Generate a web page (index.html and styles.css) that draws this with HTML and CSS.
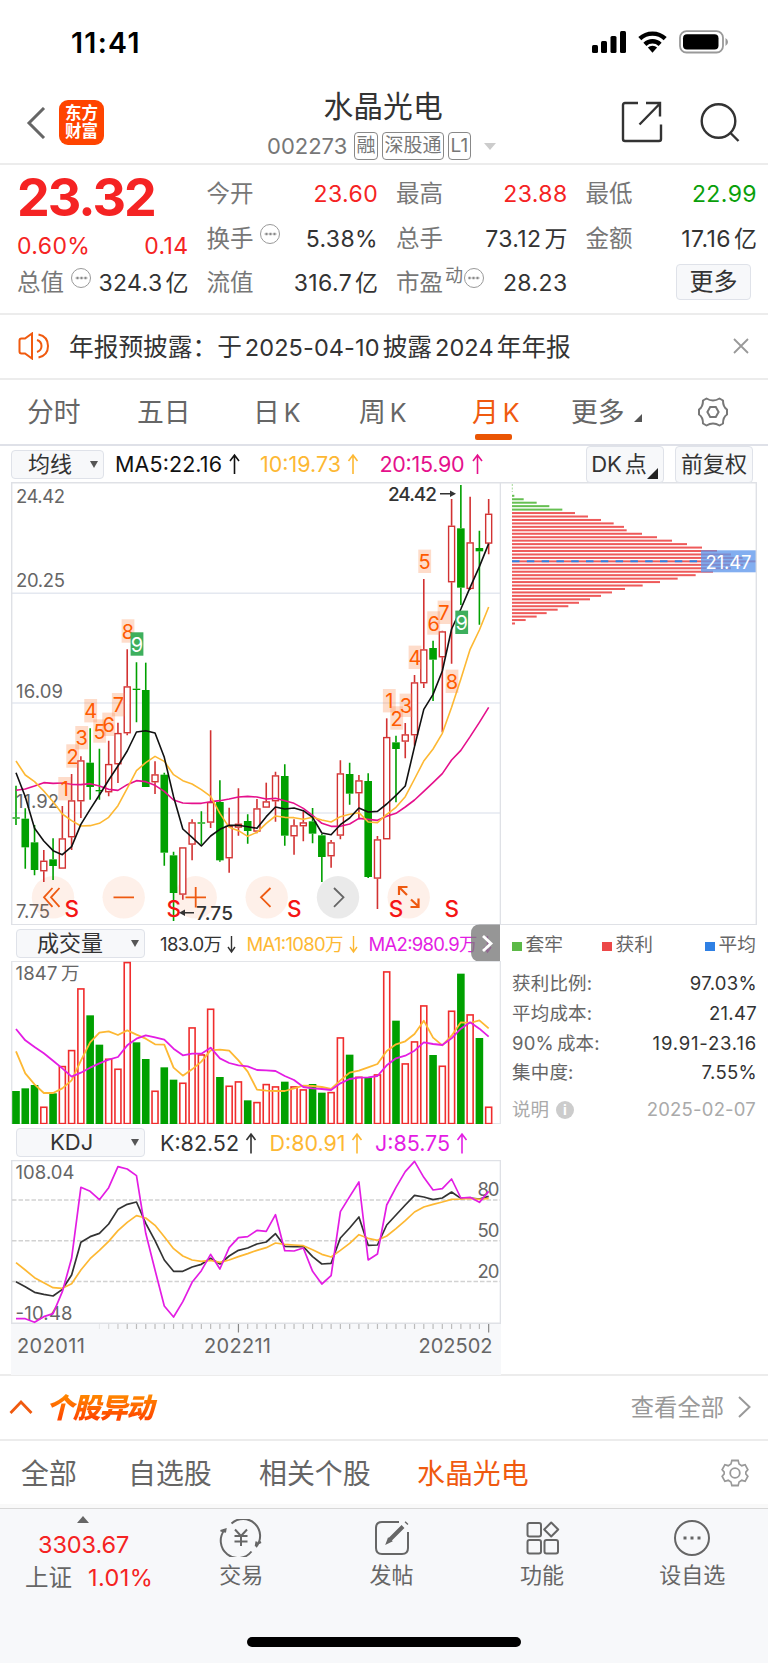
FILE: index.html
```html
<!DOCTYPE html>
<html lang="zh-CN">
<head>
    <meta charset="UTF-8">
    <meta name="viewport" content="width=device-width, initial-scale=1.0">
    <title>水晶光电 002273</title>
    <link rel="stylesheet" href="styles.css">
</head>
<body>

<!-- 状态栏 -->
<div class="status">
    <span class="clock">11:41</span>
    <svg class="status-icons" width="138" height="26" viewBox="591 29 138 26">
        <rect x="592" y="45" width="6" height="8" rx="1.5"/>
        <rect x="601" y="41" width="6" height="12" rx="1.5"/>
        <rect x="610.5" y="36" width="6" height="17" rx="1.5"/>
        <rect x="620" y="31" width="6" height="22" rx="1.5"/>
        <g fill="none" stroke="#000" stroke-width="4.4">
            <path d="M639.8 38.6a18.6 18.6 0 0 1 25.4 0"/>
            <path d="M644.9 44.3a11 11 0 0 1 15.2 0"/>
        </g>
        <path d="M652.5 52.8l-4.6-5.2a6.6 6.6 0 0 1 9.2 0z"/>
        <rect x="680" y="31.2" width="43" height="21.3" rx="6.5" fill="none" stroke="#999" stroke-width="1.8"/>
        <rect x="683" y="34.2" width="35.5" height="15.3" rx="4"/>
        <path d="M725.5 38v8q2.5-1.5 2.5-4t-2.5-4z" fill="#999"/>
    </svg>
</div>

<!-- 标题 -->
<header class="nav">
    <svg class="back" width="20" height="32" viewBox="0 0 20 32"><path d="M18 1L3 16l15 15"/></svg>
    <div class="logo">东方<br>财富</div>
    <div class="title">
        <h1>水晶光电</h1>
        <div class="code">
            <span class="num">002273</span><span class="tag">融</span><span class="tag">深股通</span><span class="tag">L1</span><i class="caret"></i>
        </div>
    </div>
    <svg class="share" width="42" height="42" viewBox="0 0 42 42"><path d="M17 2H4q-2 0-2 2v34q0 2 2 2h34q2 0 2-2V23.500M25 2h14v13.500M39 2.500L18.500 23.500"/></svg>
    <svg class="search" width="40" height="42" viewBox="0 0 40 42"><circle cx="18.500" cy="19" r="16.800"/><path d="M30.500 31l8 8"/></svg>
</header>

<!-- 行情 -->
<section class="quote">
    <div class="col">
        <div class="price">23.32</div>
        <div class="row change"><span>0.60%</span><span>0.14</span></div>
        <div class="row"><label>总值</label><i class="tip"></i><b>324.3<em>亿</em></b></div>
    </div>
    <div class="col">
        <div class="row"><label>今开</label><b class="up">23.60</b></div>
        <div class="row"><label>换手</label><i class="tip"></i><b>5.38%</b></div>
        <div class="row"><label>流值</label><b>316.7<em>亿</em></b></div>
    </div>
    <div class="col">
        <div class="row"><label>最高</label><b class="up">23.88</b></div>
        <div class="row"><label>总手</label><b>73.12<em>万</em></b></div>
        <div class="row"><label>市盈</label><sup>动</sup><i class="tip"></i><b>28.23</b></div>
    </div>
    <div class="col">
        <div class="row"><label>最低</label><b class="down">22.99</b></div>
        <div class="row"><label>金额</label><b>17.16<em>亿</em></b></div>
        <div class="row"><button class="more">更多</button></div>
    </div>
</section>

<!-- 公告 -->
<section class="notice">
    <svg width="32" height="28" viewBox="0 0 32 28"><path d="M1.500 8.500q0-2 2-2h3.500l7-5v25l-7-5H3.500q-2 0-2-2zM19 8q4.500 1.500 4.500 6T19 20M20.500 2.500q9.500 2 9.500 11.500t-9.500 11.500"/></svg>
    <p>年报预披露：于<span class="n1">2025-04-10</span>披露<span class="n2">2024</span>年年报</p>
    <svg class="close" width="16" height="16" viewBox="0 0 16 16"><path d="M1 1l14 14M15 1L1 15"/></svg>
</section>

<!-- 周期 -->
<nav class="periods">
    <span>分时</span>
    <span>五日</span>
    <span>日<u>K</u></span>
    <span>周<u>K</u></span>
    <span class="active">月<u>K</u></span>
    <span>更多<i class="corner"></i></span>
    <svg width="32" height="30" viewBox="-16 -15 32 30"><path d="M-6.500-13.500Q0-9.500 6.500-13.500L10-11.500Q10-5 14-2.500V2.500Q10 5 10 11.500L6.500 13.500Q0 9.500-6.500 13.500L-10 11.500Q-10 5-14 2.500V-2.500Q-10-5-10-11.500z" stroke-linejoin="round"/><path d="M-2.800-5h5.600L5.600 0 2.800 5h-5.600L-5.600 0z"/></svg>
</nav>

<!-- 图表 -->
<div class="ma-bar">
    <button class="select">均线<i></i></button>
    <svg width="470" height="36" viewBox="110 446 470 36" class="legend">
        <text x="115" y="472" textLength="107" fill="#111">MA5:22.16</text>
        <text x="260" y="472" textLength="81" fill="#fdb833">10:19.73</text>
        <text x="379.500" y="472" textLength="85" fill="#e5108c">20:15.90</text>
        <g fill="none" stroke-width="1.600">
            <path d="M234.500 474V456M230 461l4.500-6 4.500 6" stroke="#111"/>
            <path d="M353 474V456M348.500 461l4.500-6 4.500 6" stroke="#fdb833"/>
            <path d="M477.500 474V456M473 461l4.500-6 4.500 6" stroke="#e5108c"/>
        </g>
    </svg>
    <button class="box">DK<em>点</em><i class="corner"></i></button>
    <button class="box">前复权</button>
</div>

<div class="charts">
    <div class="left">
        <svg id="kline" width="490" height="443" viewBox="11 482 490 443"></svg>
        <div class="sub-bar">
            <button class="select wide">成交量<i></i></button>
            <svg width="350" height="36" viewBox="150 925 350 36" class="legend small">
                <text x="160" y="950.500" textLength="62" fill="#333">183.0万</text>
                <text x="246.500" y="950.500" textLength="97" fill="#fdb833">MA1:1080万</text>
                <text x="368.500" y="950.500" textLength="109" fill="#e31de3">MA2:980.9万</text>
                <g fill="none" stroke-width="1.400">
                    <path d="M231.500 936v15.500M228 947l3.500 5 3.500-5" stroke="#333"/>
                    <path d="M353.500 936v15.500M350 947l3.500 5 3.500-5" stroke="#fdb833"/>
                    <path d="M487.500 936v15.500M484 947l3.500 5 3.500-5" stroke="#e31de3"/>
                </g>
                <path d="M500 924.500h-20q-9 0-9 9v19q0 9 9 9h20z" fill="#7c7c7c" fill-opacity=".8"/>
                <path d="M483 936l8 7.500-8 7.500" fill="none" stroke="#fff" stroke-width="2.800"/>
            </svg>
        </div>
        <svg id="volume" width="490" height="163" viewBox="11 961 490 163"></svg>
        <div class="sub-bar">
            <button class="select wide kdj">KDJ<i></i></button>
            <svg width="350" height="36" viewBox="150 1124 350 36" class="legend">
                <text x="160" y="1151" textLength="79" fill="#333">K:82.52</text>
                <text x="269.500" y="1151" textLength="76" fill="#fdb833">D:80.91</text>
                <text x="375" y="1151" textLength="75" fill="#e31de3">J:85.75</text>
                <g fill="none" stroke-width="1.600">
                    <path d="M251 1153.500V1135M246.500 1140l4.500-6 4.500 6" stroke="#333"/>
                    <path d="M357 1153.500V1135M352.500 1140l4.500-6 4.500 6" stroke="#fdb833"/>
                    <path d="M462 1153.500V1135M457.500 1140l4.500-6 4.500 6" stroke="#e31de3"/>
                </g>
            </svg>
        </div>
        <svg id="kdj" width="490" height="215" viewBox="11 1160 490 215"></svg>
    </div>

    <!-- 筹码分布 -->
    <div class="right">
        <svg id="chips" width="256" height="443" viewBox="501 482 256 443"></svg>
        <div class="chip-legend">
            <span class="g">套牢</span><span class="r">获利</span><span class="b">平均</span>
        </div>
        <dl>
            <div><dt>获利比例:</dt><dd>97.03%</dd></div>
            <div><dt>平均成本:</dt><dd>21.47</dd></div>
            <div><dt>90%<em>成本:</em></dt><dd class="wide">19.91-23.16</dd></div>
            <div><dt>集中度:</dt><dd>7.55%</dd></div>
        </dl>
        <div class="chip-date"><span>说明<i>i</i></span><span class="date">2025-02-07</span></div>
    </div>
</div>

<!-- 个股异动 -->
<section class="events">
    <svg width="24" height="16" viewBox="0 0 24 16"><path d="M1.500 14L12 3l10.500 11"/></svg>
    <h2>个股异动</h2>
    <a>查看全部<svg width="13" height="22" viewBox="0 0 13 22"><path d="M1 1l10.500 10L1 21"/></svg></a>
</section>

<nav class="filters">
    <span>全部</span>
    <span>自选股</span>
    <span>相关个股</span>
    <span class="active">水晶光电</span>
    <svg width="28" height="28" viewBox="-14 -14 28 28"><path d="M-3.500-12.500h7l1 3.500 3 1.700 3.800-1 3 5L12-.8v1.600l2.300 2.500-3 5-3.800-1-3 1.700-1 3.500h-7l-1-3.500-3-1.700-3.800 1-3-5L-12 .8v-1.600l-2.300-2.500 3-5 3.800 1 3-1.700z" transform="scale(.9 1)"/><circle r="4.800"/></svg>
</nav>

<!-- 底部 -->
<footer class="tabbar">
    <div class="index">
        <i></i>
        <span class="up pts">3303.67</span>
        <div><span>上证</span><span class="up pct">1.01%</span></div>
    </div>
    <div class="item">
        <svg width="44" height="38" viewBox="-22 -19 44 38"><path d="M-9.500-14.500A17 17 0 0 1 15 9M10.500 13.500A17 17 0 0 1-16.500-8M-20.500-7l5-1.500-.5 3M20 4l-5 2.500.5-3"/><path d="M-6-8.500L0-2l6-6.500M0-2v10M-6.500-2h13M-6.500 3.500h13"/></svg>
        <span>交易</span>
    </div>
    <div class="item">
        <svg width="44" height="38" viewBox="-22 -19 44 38"><path d="M7-16h-17q-6 0-6 6v20q0 6 6 6h20q6 0 6-6V-6"/><path d="M11-11.500L-3 2.500M14-14.300l1-1" stroke-width="4"/><path d="M-3.500 1l-1.500 4 4-2z"/></svg>
        <span>发帖</span>
    </div>
    <div class="item">
        <svg width="44" height="38" viewBox="-22 -19 44 38"><rect x="-14.500" y="-15" width="13.500" height="13.500" rx="2"/><rect x="-14.500" y="2" width="13.500" height="13.500" rx="2"/><rect x="2.500" y="2" width="13.500" height="13.500" rx="2"/><path d="M9.200-15.500l7 7-7 7-7-7z" stroke-linejoin="round"/></svg>
        <span>功能</span>
    </div>
    <div class="item">
        <svg width="44" height="38" viewBox="-22 -19 44 38"><circle r="17"/><path d="M-8.500 0h3M-1.500 0h3M5.500 0h3" stroke-width="3"/></svg>
        <span>设自选</span>
    </div>
</footer>
<div class="home"><i></i></div>

<script src="chart.js"></script>
</body>
</html>
```
FILE: styles.css
```css
* {
    box-sizing: border-box;
}

body {
    margin: 0;
    width: 768px;
    background: #fff;
    color: #333;
    font-family: Inter, "Noto Sans CJK SC", sans-serif;
    font-size: 22px;
}

svg {
    display: block;
    flex: none;
}

button {
    font: inherit;
    color: #333;
    padding: 0;
    background: #f7f8fa;
    border: 1.5px solid #dfe2e9;
    border-radius: 4px;
    white-space: nowrap;
}

em, i, u {
    font-style: normal;
    text-decoration: none;
}

.up {
    color: #f52323 !important;
}

.down {
    color: #0a9f0a !important;
}

/* 状态栏 */
.status {
    height: 84px;
    padding: 0 39px 0 71px;
    display: flex;
    justify-content: space-between;
    align-items: center;
}

.clock {
    font-size: 28.5px;
    font-weight: 600;
    color: #000;
    letter-spacing: 1.3px;
}

/* 标题 */
.nav {
    height: 81px;
    border-bottom: 2px solid #ececec;
    display: flex;
    padding-left: 26px;
}

.nav svg, .notice svg, .periods svg, .events svg, .filters svg, .tabbar svg {
    fill: none;
    stroke: #333;
    stroke-width: 2.4;
}

.nav .back {
    margin-top: 23px;
    stroke: #666;
    stroke-width: 3;
}

.logo {
    width: 45px;
    height: 45px;
    margin: 16px 0 0 13px;
    padding-top: 4px;
    border-radius: 9px;
    background: #ff4400;
    color: #fff;
    font-size: 16.5px;
    line-height: 18px;
    font-weight: 700;
    text-align: center;
}

.title {
    width: 517px;
    padding-left: 163px;
    flex: none;
}

h1 {
    margin: 0;
    font-size: 29.8px;
    line-height: 45px;
    font-weight: 400;
    padding-left: 56.5px;
}

.code {
    display: flex;
    align-items: center;
    height: 34px;
    color: #777;
}

.code .num {
    width: 87px;
    letter-spacing: 0;
}

.tag {
    height: 28px;
    line-height: 25px;
    border: 1.5px solid #888;
    border-radius: 4px;
    padding: 0 1.5px;
    margin-right: 4px;
    font-size: 19px;
    white-space: nowrap;
}

.caret {
    border: 6.5px solid transparent;
    border-top: 7px solid #ccc;
    border-bottom: 0;
    margin-left: 9px;
}

.share {
    margin-top: 17px;
}

.search {
    margin: 18px 0 0 37px;
}

/* 行情 */
.quote {
    height: 150px;
    border-bottom: 2px solid #ececec;
    padding: 7px 12px 0 17px;
    display: grid;
    grid-template-columns: repeat(4, 170.600px);
    justify-content: space-between;
    font-size: 23px;
}

.row {
    height: 44.500px;
    line-height: 44px;
    display: flex;
    white-space: nowrap;
}

.row label {
    color: #777;
    font-size: 23.500px;
}

.row b {
    font-weight: 400;
    margin: 0 -1px 0 auto;
    letter-spacing: 0.4px;
}

.row em {
    margin-left: 3px;
    letter-spacing: 0;
}

.row sup {
    font-size: 18px;
    line-height: 30px;
    color: #777;
    margin-left: 2px;
}

.tip {
    width: 20px;
    height: 20px;
    border: 1.5px solid #999;
    border-radius: 50%;
    margin: 7px 0 0 7px;
    background: radial-gradient(circle, #888 1.2px, transparent 1.7px) center / 4px 20px content-box no-repeat;
    background-repeat: repeat-x;
    padding: 0 2.500px;
}

.row sup + .tip {
    margin-left: 1px;
}

.price {
    height: 60px;
    line-height: 52px;
    font-size: 52px;
    font-weight: 700;
    color: #f52323;
    letter-spacing: -2px;
}

.change {
    height: 29px;
    line-height: 29px;
    color: #f52323;
    justify-content: space-between;
    letter-spacing: 0.4px;
    margin-right: -1px;
}

.more {
    width: 75px;
    height: 36px;
    line-height: 30px;
    margin: 3px 5px 0 auto;
    font-size: 24px;
}

/* 公告 */
.notice {
    height: 65px;
    border-bottom: 2px solid #ececec;
    display: flex;
    align-items: center;
    padding: 0 19px 2px 18px;
}

.notice svg {
    stroke: #f05a0f;
    stroke-width: 2;
}

.notice p {
    margin: -2px auto 0 19px;
    font-size: 24.700px;
    white-space: nowrap;
}

.notice p span {
    margin: 0 3px;
    font-size: 23.500px;
    letter-spacing: 0.1px;
}

.notice .close {
    stroke: #999;
    stroke-width: 1.8;
}

/* 周期 */
.periods {
    height: 66px;
    border-bottom: 2px solid #dfe1e8;
    display: grid;
    grid-template-columns: 110px 116px 106px 113px 99px 126px 32px;
    align-items: center;
    padding-left: 27px;
    font-size: 26.800px;
    color: #666;
}

.periods span {
    line-height: 65px;
    height: 64px;
    white-space: nowrap;
}

.periods u {
    margin-left: 4px;
    font-size: 25px;
}

.periods .active {
    color: #f05a0f;
    position: relative;
}

.periods .active::after {
    content: "";
    position: absolute;
    left: 3px;
    top: 54px;
    width: 37px;
    height: 6px;
    border-radius: 2px;
    background: #ea5504;
}

.periods svg {
    stroke: #777;
    stroke-width: 2;
}

.corner {
    display: inline-block;
    border-left: 8px solid transparent;
    border-bottom: 8px solid #555;
    margin-left: 9px;
}

/* 图表 */
.ma-bar {
    height: 36px;
    padding-left: 11px;
    display: flex;
    align-items: center;
}

.select {
    width: 93px;
    height: 29px;
    line-height: 24px;
    font-size: 22px;
    display: flex;
    flex: none;
    align-items: center;
    justify-content: space-between;
    padding: 0 5px 0 16px;
}

.select i {
    border: 4.5px solid transparent;
    border-top: 7px solid #555;
    border-bottom: 0;
}

.select.wide {
    width: 129px;
    padding-left: 20px;
    margin-left: 5px;
    align-self: center;
}

.select.wide.kdj {
    padding-left: 33px;
}

.ma-bar .legend {
    margin: 0 6px;
}

.legend text {
    font-size: 21.500px;
}

.legend.small text {
    font-size: 18.500px;
}

.box {
    height: 37px;
    width: 78px;
    line-height: 32px;
    position: relative;
    flex: none;
}

.box + .box {
    margin-left: 11px;
}

.box em {
    margin: 0 12px 0 3px;
}

.box .corner {
    position: absolute;
    right: 5px;
    bottom: 3px;
    margin: 0;
    border-left-width: 11px;
    border-bottom: 11px solid #222;
}

.charts {
    display: flex;
    padding-left: 11px;
    height: 892px;
}

.left {
    width: 490px;
}

.sub-bar {
    height: 36px;
    display: flex;
}

.sub-bar svg {
    margin-left: 5px;
    overflow: visible;
}

.right {
    width: 256px;
}

.chip-legend {
    display: grid;
    grid-template-columns: 90px 103px 52px;
    padding-left: 11px;
    height: 39px;
    line-height: 40px;
    font-size: 18.700px;
    color: #666;
    white-space: nowrap;
}

.chip-legend span::before {
    content: "";
    display: inline-block;
    width: 9.500px;
    height: 9.500px;
    margin-right: 4px;
}

.chip-legend .g::before { background: #5cb947; }
.chip-legend .r::before { background: #ec4848; }
.chip-legend .b::before { background: #2f80e4; }

dl {
    margin: 5px 0 0;
    padding: 0 1px 0 11px;
    font-size: 18.500px;
}

dl div, .chip-date {
    display: flex;
    justify-content: space-between;
    height: 29.800px;
    line-height: 29.800px;
}

dt {
    color: #666;
    letter-spacing: 0.2px;
}

dt em {
    margin-left: 3px;
}

dd {
    margin: 0 -1px 0 0;
    letter-spacing: 0.3px;
}

dd.wide {
    letter-spacing: 0.8px;
}

.chip-date {
    padding: 0 1px 0 11px;
    margin-top: 7px;
    font-size: 18.500px;
    color: #aaa;
}

.chip-date .date {
    letter-spacing: 0.2px;
}

.chip-date i {
    display: inline-block;
    width: 18px;
    height: 18px;
    line-height: 18px;
    border-radius: 50%;
    background: #ccc;
    color: #fff;
    font-size: 14px;
    font-weight: 700;
    text-align: center;
    margin-left: 7px;
    vertical-align: 1px;
}

/* 个股异动 */
.events {
    height: 67px;
    border-top: 2px solid #ececec;
    border-bottom: 2px solid #ececec;
    display: flex;
    align-items: center;
    padding: 0 17px 3px 9px;
}

.events > svg {
    stroke: #f05a0f;
    stroke-width: 2.8;
    margin-top: 1px;
}

h2 {
    margin: 0 auto 0 13px;
    padding-right: 6px;
    font-size: 28px;
    font-weight: 900;
    font-style: italic;
    letter-spacing: -1.3px;
    background: linear-gradient(#ff8a00 20%, #ff4800 80%);
    -webkit-background-clip: text;
    background-clip: text;
    color: transparent;
}

.events a {
    display: flex;
    align-items: center;
    color: #999;
    font-size: 23.300px;
}

.events a svg {
    margin: 2px 0 0 14px;
    stroke: #999;
    stroke-width: 2;
}

.filters {
    height: 67px;
    display: grid;
    grid-template-columns: 107px 131px 158px 304px 28px;
    align-items: center;
    padding: 0 0 2px 21px;
    font-size: 27.900px;
    color: #666;
    border-bottom: 4px solid #f9f9f9;
}

.filters .active {
    color: #f05a0f;
}

.filters svg {
    stroke: #999;
    stroke-width: 1.8;
    margin-top: 2px;
}

/* 底部 */
.tabbar {
    height: 112px;
    border-top: 1.500px solid #d8d8d8;
    background: #f7f8fa;
    display: grid;
    grid-template-columns: 166px repeat(4, 150.400px);
    color: #666;
}

.tabbar svg {
    stroke: #666;
    stroke-width: 2;
    margin-bottom: 2px;
}

.item {
    display: flex;
    flex-direction: column;
    align-items: center;
    padding-top: 10px;
    font-size: 22px;
    line-height: 32px;
}

.index {
    padding-top: 7px;
    line-height: 33px;
    font-size: 23.500px;
}

.index i {
    display: block;
    width: 0;
    border: 6.5px solid transparent;
    border-bottom: 7px solid #666;
    border-top: 0;
    margin: 0 0 5px 77px;
}

.index div {
    padding-left: 25px;
}

.pts {
    display: block;
    padding-left: 38px;
    letter-spacing: -0.1px;
}

.pct {
    margin-left: 16px;
    letter-spacing: 0.4px;
}

.home {
    height: 43px;
    background: #f7f8fa;
    padding-top: 17px;
}

.home i {
    display: block;
    width: 274px;
    height: 10px;
    border-radius: 5px;
    background: #000;
    margin: 0 auto;
}

/* svg 文字 */
.axis {
    font-size: 18.500px;
    fill: #666;
}

.date-axis {
    font-size: 20px;
    fill: #666;
}

.mark {
    font-size: 20px;
    text-anchor: middle;
}

.sell {
    font-size: 22.500px;
    font-weight: 500;
    fill: #f51414;
    text-anchor: middle;
}

.extreme {
    font-size: 19px;
    font-weight: 500;
    fill: #333;
}
```
FILE: chart.js
```js
// 每根K线的横坐标
const STEP = 9.268;
const X0 = 16;
const GREEN = '#00a000';
const RED = '#d23232';

// 设备像素是 3x，数据按设备像素保存
function px(base, v) {
    return (base + v / 3).toFixed(2);
}

function cx(i) {
    return X0 + STEP * i;
}

function line(data, base, color, width) {
    const points = data.map((v, i) => cx(i).toFixed(2) + ',' + px(base, v)).join(' ');
    return `<polyline points="${points}" fill="none" stroke="${color}" stroke-width="${width}" stroke-linejoin="round"/>`;
}

function hline(y, color, dash) {
    return `<path d="M12 ${y}H500" stroke="${color}" stroke-width="1.6" ${dash ? `stroke-dasharray="${dash}"` : ''}/>`;
}

function text(cls, x, y, str, len) {
    return `<text class="${cls}" x="${x}" y="${y}" ${len ? `textLength="${len}"` : ''}>${str}</text>`;
}

// 涨跌, 最高, 实体上, 实体下, 最低
const candles = [
    [0, 917, 1012, 1016, 1035], [0, 985, 1016, 1102, 1166], [0, 1035, 1087, 1170, 1186], [1, 1110, 1142, 1174, 1206],
    [0, 1075, 1138, 1158, 1200], [1, 978, 1075, 1166, 1166], [1, 882, 961, 1072, 1110], [1, 829, 841, 964, 1014],
    [0, 745, 848, 921, 959], [0, 806, 930, 934, 959], [1, 782, 852, 937, 949], [1, 728, 759, 853, 909],
    [1, 508, 619, 760, 766], [0, 547, 626, 630, 727], [0, 548, 630, 921, 921], [1, 844, 883, 907, 942],
    [0, 878, 884, 1118, 1157], [0, 1115, 1126, 1239, 1323], [1, 1102, 1102, 1244, 1259], [1, 1018, 1027, 1094, 1141],
    [0, 994, 1027, 1031, 1094], [1, 751, 966, 1028, 1044], [0, 901, 966, 1141, 1145], [1, 983, 1037, 1135, 1178],
    [1, 925, 1031, 1043, 1067], [0, 1003, 1023, 1053, 1091], [1, 957, 985, 1055, 1060], [1, 908, 964, 983, 983],
    [1, 875, 886, 964, 1025], [0, 853, 888, 1067, 1097], [1, 1018, 1036, 1069, 1124], [1, 994, 1027, 1039, 1084],
    [0, 984, 1024, 1061, 1090], [0, 1062, 1066, 1131, 1206], [1, 1080, 1087, 1129, 1163], [1, 841, 880, 1067, 1078],
    [0, 848, 882, 941, 974], [1, 885, 901, 940, 1018], [0, 880, 903, 1191, 1194], [1, 1068, 1078, 1196, 1287],
    [1, 715, 771, 1078, 1078], [0, 767, 787, 807, 967], [1, 729, 763, 785, 835], [1, 585, 607, 766, 797],
    [1, 297, 508, 610, 624], [0, 482, 504, 539, 663], [1, 452, 454, 532, 757], [1, 57, 137, 307, 551],
    [0, 15, 145, 323, 375], [1, 50, 187, 327, 330], [0, 152, 204, 214, 434], [1, 57, 101, 191, 223]
];
const ma5 = [878, 950, 1045, 1083, 1112, 1124, 1100, 1033, 988, 945, 900, 858, 813, 756, 752, 759, 832, 950, 1047, 1072, 1098, 1068, 1048, 1036, 1036, 1040, 1045, 1010, 981, 987, 984, 992, 1012, 1059, 1064, 1034, 1014, 984, 996, 994, 972, 946, 918, 800, 688, 643, 573, 447, 387, 322, 260, 191];
const ma10 = [843, 885, 905, 933, 965, 1002, 1022, 1038, 1037, 1030, 1012, 977, 925, 872, 848, 829, 844, 884, 902, 912, 929, 949, 1000, 1042, 1052, 1069, 1057, 1030, 1008, 1012, 1013, 1018, 1012, 1020, 1026, 1010, 1003, 998, 1026, 1028, 1003, 982, 950, 897, 843, 807, 760, 682, 597, 508, 450, 381];
const ma20 = [931, 927, 918, 908, 910, 909, 913, 914, 911, 918, 928, 931, 914, 902, 905, 916, 934, 960, 969, 970, 970, 965, 962, 957, 951, 949, 951, 957, 955, 962, 970, 985, 1006, 1030, 1039, 1039, 1032, 1015, 1018, 1021, 1009, 1000, 981, 960, 934, 908, 881, 840, 811, 770, 727, 682];

// 九转序列
const marks = [
    [64.7, 788.7, 1], [72.7, 756, 2], [81.7, 737.7, 3], [90.7, 710.7, 4], [99.7, 731, 5], [108.7, 724.3, 6],
    [118.3, 704.7, 7], [128, 631, 8], [137, 644, 9], [389.3, 700.7, 1], [396.7, 718, 2], [406, 705.3, 3],
    [415, 657.3, 4], [424.7, 561.3, 5], [433.7, 623, 6], [444, 612.3, 7], [452, 681.3, 8], [461.7, 622.3, 9]
];

function drawKline() {
    let s = '';
    [593.3, 703, 813].forEach(y => s += hline(y, '#e4e8f0'));
    s += text('axis', 16, 502.5, '24.42', 49) + text('axis', 16, 587, '20.25', 49);
    s += text('axis', 16, 697.5, '16.09', 47) + text('axis', 16, 808, '11.92', 43) + text('axis', 16, 918, '7.75', 34);

    // 悬浮按钮
    const y = 897.3;
    [53, 123.7, 195.7, 266.7, 338, 408.7].forEach((x, i) => {
        s += `<circle cx="${x}" cy="${y}" r="21.2" fill="${i === 4 ? '#e9e9e9' : '#f05a0f'}" fill-opacity="${i === 4 ? 0.95 : 0.09}"/>`;
    });
    s += `<g fill="none" stroke="#ee5a11" stroke-width="1.8">
        <path d="M52.500 888l-8.500 9.300 8.500 9.500M59.500 888l-8.500 9.300 8.500 9.500M113.500 ${y}h20.500M185.500 ${y}h20.500M195.700 887v20.500M270.500 888l-9.500 9.300 9.500 9.500"/>
        <path d="M407 895l-7.500-7.500M399 895v-8h8.500M411 899.500l7.500 7M410.500 907h8v-8.500" stroke-width="2.200"/>
        <path d="M334 888l9.500 9.300-9.500 9.500" stroke="#666"/></g>`;

    candles.forEach((c, i) => {
        const x = cx(i);
        const color = c[0] ? RED : GREEN;
        s += `<path d="M${x} ${px(480, c[1])}V${px(480, c[2])}M${x} ${px(480, c[3])}V${px(480, c[4])}" stroke="${color}" stroke-width="1.6"/>`;
        const h = (c[3] - c[2]) / 3;
        if (c[0]) {
            s += `<rect x="${x - 3}" y="${px(480.6, c[2])}" width="6" height="${Math.max(h - 1.2, 1)}" fill="#fff" stroke="${color}" stroke-width="1.4"/>`;
        } else {
            s += `<rect x="${x - 3.8}" y="${px(480, c[2])}" width="7.6" height="${h}" fill="${color}"/>`;
        }
    });
    s += line(ma20, 480, '#e5108c', 1.6) + line(ma10, 480, '#fdb833', 1.6) + line(ma5, 480, '#111', 1.6);

    marks.forEach(m => {
        const nine = m[2] === 9;
        s += `<rect x="${m[0] - 6.4}" y="${m[1] - 11.7}" width="12.8" height="23.4" fill="${nine ? '#3daf5d' : '#fb8a50'}" fill-opacity="${nine ? 1 : 0.3}"/>`;
        s += `<text class="mark" x="${m[0]}" y="${m[1] + 7.5}" fill="${nine ? '#fff' : '#ff5a00'}">${m[2]}</text>`;
    });
    [71.7, 173.7, 294.3, 396, 451.7].forEach(x => s += text('sell', x, 916.5, 'S'));

    // 最高 / 最低
    s += text('extreme', 388, 501, '24.42', 49) + text('extreme', 196, 920, '7.75', 37);
    s += `<path d="M440 493.700h14M194 912.700h-12" stroke="#333" stroke-width="1.400"/>
        <path d="M456 493.700l-6-3.200v6.400zM179 912.700l6-3.200v6.400z" fill="#333"/>`;
    s += '<path d="M11.700 925V482.700H501M500.400 483v442M11 924.600H501" fill="none" stroke="#dfe1e6" stroke-width="1.400"/>';
    document.getElementById('kline').innerHTML = s;
}

// 成交量柱顶
const vols = [573, 565, 555, 620, 580, 498, 450, 265, 346, 434, 476, 506, 186, 427, 477, 572, 502, 539, 548, 382, 463, 326, 531, 557, 544, 601, 606, 552, 559, 545, 559, 568, 552, 578, 576, 412, 464, 530, 532, 523, 214, 362, 490, 424, 316, 465, 497, 332, 221, 343, 414, 620];
const vma5 = [454, 520, 553, 579, 579, 565, 541, 482, 427, 398, 394, 405, 391, 404, 416, 433, 434, 503, 527, 508, 485, 451, 449, 452, 481, 515, 569, 572, 573, 573, 565, 557, 558, 561, 567, 541, 518, 512, 502, 492, 453, 433, 424, 402, 362, 413, 436, 407, 367, 369, 361, 385];
const vma10 = [387, 421, 441, 460, 482, 505, 530, 518, 503, 490, 479, 471, 436, 416, 406, 412, 419, 446, 466, 461, 461, 443, 475, 489, 496, 499, 510, 511, 513, 528, 540, 561, 565, 567, 570, 550, 537, 533, 532, 528, 496, 475, 467, 452, 427, 432, 435, 415, 386, 367, 386, 410];

function drawVolume() {
    let s = '<path d="M11.700 961.300H500.400V1123.800H11.700z" fill="none" stroke="#e3e5e9" stroke-width="1.400"/>';
    s += text('axis', 15.5, 980, '1847', 42) + text('axis', 61, 980, '万');
    vols.forEach((v, i) => {
        const top = 900 + v / 3;
        if (candles[i][0] || i === 20) {
            s += `<rect x="${cx(i) - 3}" y="${top + 0.6}" width="6" height="${1123 - top}" fill="#fff" stroke="#f02d2d" stroke-width="1.6"/>`;
        } else {
            s += `<rect x="${cx(i) - 3.8}" y="${top}" width="7.6" height="${1124 - top}" fill="${GREEN}"/>`;
        }
    });
    s += line(vma5, 900, '#fdb833', 1.8) + line(vma10, 900, '#e31de3', 1.8);
    document.getElementById('volume').innerHTML = s;
}

const K = [485, 500, 517, 523, 528, 508, 465, 367, 350, 340, 312, 268, 253, 246, 310, 362, 420, 454, 454, 441, 433, 415, 432, 408, 391, 384, 372, 366, 341, 379, 380, 380, 410, 432, 430, 354, 324, 291, 376, 375, 315, 285, 255, 226, 231, 239, 234, 216, 235, 234, 237, 229];
const D = [428, 450, 473, 488, 503, 505, 491, 450, 416, 391, 364, 332, 307, 287, 294, 316, 350, 386, 408, 420, 424, 421, 427, 420, 410, 401, 391, 383, 369, 373, 375, 377, 389, 403, 411, 391, 370, 344, 355, 361, 348, 326, 302, 276, 261, 253, 246, 238, 237, 235, 238, 235];
const J = [596, 596, 607, 590, 581, 515, 415, 202, 214, 239, 203, 140, 147, 167, 340, 450, 558, 591, 545, 487, 452, 403, 447, 383, 353, 350, 331, 334, 284, 392, 393, 384, 454, 492, 467, 275, 230, 186, 420, 402, 255, 202, 155, 124, 172, 210, 206, 177, 234, 232, 247, 214];

function drawKdj() {
    let s = '<rect x="11" y="1323" width="490" height="52" fill="#f7f8fa"/>';
    s += '<path d="M11.700 1160.500H500.400V1323.300H11.700z" fill="#fff" stroke="#dfe1e6" stroke-width="1.400"/>';
    [1200, 1240.7, 1281.5].forEach(y => s += hline(y, '#d2d2d2', '4.500 2'));
    s += text('axis', 15.5, 1179, '108.04', 59) + text('axis', 15.5, 1319.5, '-10.48', 57);
    s += text('axis', 477.5, 1196, '80', 22) + text('axis', 477.5, 1237, '50', 22) + text('axis', 477.5, 1278, '20', 22);
    s += line(K, 1120, '#333', 1.7) + line(D, 1120, '#fdb833', 1.7) + line(J, 1120, '#e31de3', 1.7);
    // 时间刻度
    for (let i = 9; i < 52; i++) {
        const big = i === 24 || i === 51;
        s += `<path d="M${cx(i)} 1324v${big ? 8.500 : 5}" stroke="${big ? '#888' : '#bbb'}" stroke-width="1.200" opacity="${Math.min((i - 8) / 4, 1)}"/>`;
    }
    s += text('date-axis', 17, 1353, '202011', 68) + text('date-axis', 204, 1353, '202211', 67) + text('date-axis', 418.5, 1353, '202502', 74);
    document.getElementById('kdj').innerHTML = s;
}

// 筹码峰右端
const chips = [73, 101, 140, 178, 217, 255, 294, 333, 371, 402, 410, 456, 501, 546, 591, 636, 681, 723, 758, 799, 760, 723, 669, 617, 563, 510, 458, 405, 366, 333, 300, 267, 235, 203, 170, 140, 107, 75];

function drawChips() {
    let s = '<path d="M512.300 484v8" stroke="#8fd080" stroke-width=".8" stroke-dasharray="2 1.500"/>';
    chips.forEach((v, i) => {
        const y = 495.8 + i * 3.451;
        s += `<rect x="512" y="${y - 1}" width="${(v - 66) / 3}" height="2" fill="${i < 5 ? '#66bf52' : '#ee5a5a'}"/>`;
        if (i === 19) {
            s += `<path d="M512 ${y}h190" stroke="#2f80e4" stroke-width="2" stroke-dasharray="7.500 7.300"/>`;
        }
    });
    s += '<rect x="701" y="550.300" width="55.500" height="22" fill="#5f97ec" fill-opacity=".78"/>';
    s += '<text x="705.500" y="568.500" font-size="18.500" fill="#fff" textLength="46">21.47</text>';
    s += '<path d="M501 482.700H756.300V924.600H501" fill="none" stroke="#dfe1e6" stroke-width="1.400"/>';
    document.getElementById('chips').innerHTML = s;
}

drawKline();
drawVolume();
drawKdj();
drawChips();
```
